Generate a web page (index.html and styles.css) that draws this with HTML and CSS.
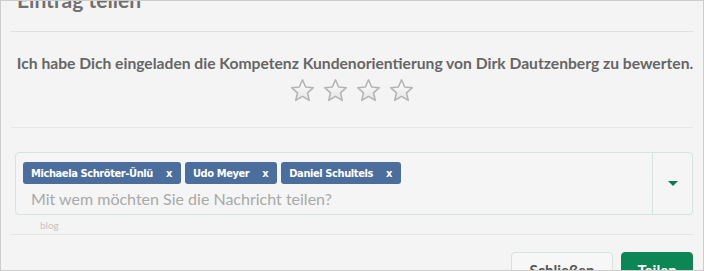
FILE: index.html
```html
<!DOCTYPE html>
<html lang="de">
<head>
<meta charset="utf-8">
<link rel="stylesheet" href="styles.css">
</head>
<body>
<div class="modal">
  <div class="modal-header">
    <h2 class="modal-title">Eintrag teilen</h2>
  </div>
  <div class="modal-body">
    <p class="invite">Ich habe Dich eingeladen die Kompetenz Kundenorientierung von Dirk Dautzenberg zu bewerten.</p>
    <div class="stars">
      <svg class="star" viewBox="0 0 24 24"><defs><linearGradient id="g" x1="0" y1="0" x2="0" y2="1"><stop offset="0" stop-color="#ffffff"/><stop offset="1" stop-color="#e4e4e4"/></linearGradient></defs><path d="M12 1.8 L15 8.6 L22.4 9.3 L16.8 14.2 L18.5 21.5 L12 17.7 L5.5 21.5 L7.2 14.2 L1.6 9.3 L9 8.6 Z" fill="url(#g)" stroke="#b4b4b4" stroke-width="1.5" stroke-linejoin="round"/></svg>
      <svg class="star" viewBox="0 0 24 24"><path d="M12 1.8 L15 8.6 L22.4 9.3 L16.8 14.2 L18.5 21.5 L12 17.7 L5.5 21.5 L7.2 14.2 L1.6 9.3 L9 8.6 Z" fill="url(#g)" stroke="#b4b4b4" stroke-width="1.5" stroke-linejoin="round"/></svg>
      <svg class="star" viewBox="0 0 24 24"><path d="M12 1.8 L15 8.6 L22.4 9.3 L16.8 14.2 L18.5 21.5 L12 17.7 L5.5 21.5 L7.2 14.2 L1.6 9.3 L9 8.6 Z" fill="url(#g)" stroke="#b4b4b4" stroke-width="1.5" stroke-linejoin="round"/></svg>
      <svg class="star" viewBox="0 0 24 24"><path d="M12 1.8 L15 8.6 L22.4 9.3 L16.8 14.2 L18.5 21.5 L12 17.7 L5.5 21.5 L7.2 14.2 L1.6 9.3 L9 8.6 Z" fill="url(#g)" stroke="#b4b4b4" stroke-width="1.5" stroke-linejoin="round"/></svg>
    </div>
  </div>
  <div class="share">
    <div class="select">
      <div class="select-main">
        <div class="tags">
          <span class="tag">Michaela Schröter-Ünlü <span class="tag-x">x</span></span>
          <span class="tag">Udo Meyer <span class="tag-x">x</span></span>
          <span class="tag">Daniel Schultels <span class="tag-x">x</span></span>
        </div>
        <div class="placeholder">Mit wem möchten Sie die Nachricht teilen?</div>
      </div>
      <div class="select-toggle"><span class="caret"></span></div>
    </div>
    <div class="hint">blog</div>
  </div>
  <div class="modal-footer">
    <button class="btn btn-default">Schließen</button>
    <button class="btn btn-primary">Teilen</button>
  </div>
</div>
</body>
</html>
```
FILE: styles.css
```css
html, body {
  margin: 0;
  padding: 0;
  background: #ffffff;
}
.modal {
  box-sizing: border-box;
  width: 704px;
  height: 271px;
  border: 1px solid #cdcdcd;
  background: #f4f4f4;
  overflow: hidden;
  font-family: Lato, "Open Sans", sans-serif;
  color: #666;
  padding: 0 10px;
}
.modal-header {
  display: flow-root;
  height: 30px;
  border-bottom: 1px solid #e0e0e0;
}
.modal-title {
  margin: -15px 0 0 0;
  padding-left: 6px;
  font-size: 21px;
  line-height: 28px;
  font-weight: 700;
  color: #707070;
}
.modal-body {
  height: 95px;
  border-bottom: 1px solid #e6e6e6;
  text-align: center;
}
.invite {
  margin: 0 -6px 0 0;
  padding-top: 21px;
  font-size: 15.65px;
  line-height: 20px;
  font-weight: 700;
  color: #666;
  white-space: nowrap;
}
.stars {
  display: flex;
  justify-content: center;
  gap: 8px;
  margin-top: 5px;
}
.star {
  width: 25px;
  height: 25px;
  display: block;
}
.share {
  height: 107px;
  border-bottom: 1px solid #e6e6e6;
  padding: 24px 0 0 4px;
  box-sizing: border-box;
}
.select {
  display: flex;
  height: 63px;
  box-sizing: border-box;
  border: 1px solid #d3e6dd;
  border-radius: 4px;
  background: #f4f5f4;
}
.select-main {
  flex: 1;
  padding: 9px 0 0 7px;
}
.tags {
  display: flex;
  gap: 4px;
}
.tag {
  display: inline-flex;
  align-items: center;
  height: 22px;
  padding: 0 9px 0 8px;
  border-radius: 3px;
  background: #4b6e9c;
  color: #fff;
  font-family: "DejaVu Sans Condensed", "Liberation Sans Narrow", Roboto, sans-serif;
  font-weight: 700;
  font-size: 11px;
  letter-spacing: -0.4px;
}
.tag-x {
  margin-left: 13px;
}
.placeholder {
  margin-top: 5px;
  padding-left: 8px;
  font-size: 16px;
  line-height: 20px;
  color: #a9a9a9;
}
.select-toggle {
  width: 39px;
  border-left: 1px solid #d3e6dd;
  display: flex;
  align-items: center;
  justify-content: center;
}
.caret {
  width: 0;
  height: 0;
  border-left: 5px solid transparent;
  border-right: 5px solid transparent;
  border-top: 5px solid #0b7a4f;
}
.hint {
  padding-left: 25px;
  margin-top: 4px;
  font-size: 10px;
  color: #c4c4c4;
}
.modal-footer {
  display: flex;
  justify-content: flex-end;
  gap: 8px;
  padding-top: 17px;
}
.btn {
  height: 36px;
  border-radius: 4px;
  font-family: Lato, "Open Sans", sans-serif;
  font-size: 15px;
  font-weight: 700;
  padding: 0;
}
.btn-default {
  width: 102px;
  border: 1px solid #d3e6dd;
  background: #f6f7f6;
  color: #555;
}
.btn-primary {
  width: 72px;
  border: 1px solid #0b8654;
  background: #0b8654;
  color: #fff;
}
```
